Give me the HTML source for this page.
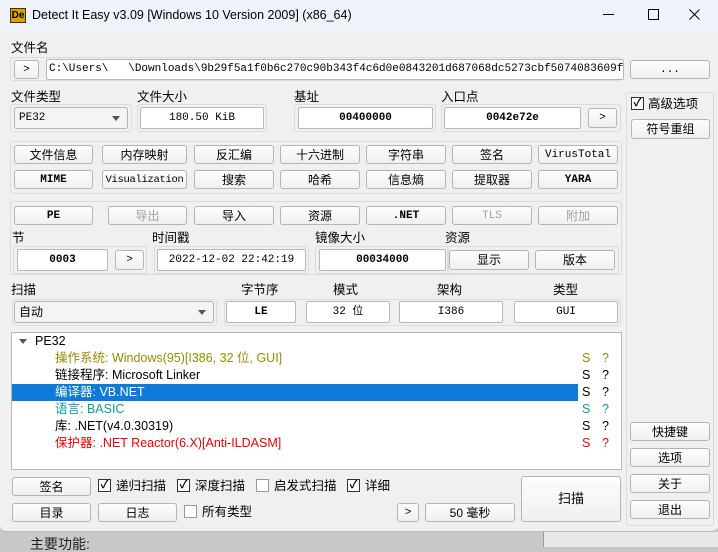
<!DOCTYPE html>
<html><head><meta charset="utf-8"><style>
*{box-sizing:border-box;margin:0;padding:0}
body{width:718px;height:547px;overflow:hidden;background:#c8c8c8;font-family:"Liberation Sans","Noto Sans CJK SC",sans-serif;font-size:12px;color:#000;position:relative}
.a{position:absolute}
.win{left:0;top:0;width:718px;height:532px;background:#f0f0f0;border-bottom:1px solid #bbb;border-radius:0 0 6px 6px}
.title{left:0;top:0;width:718px;height:31px;background:#eef3f9}
.b{position:absolute;background:linear-gradient(#fdfdfd,#f0f0f0);border:1px solid #b4b4b4;border-radius:3px;text-align:center;font-size:12px;line-height:14px;display:flex;align-items:center;justify-content:center;white-space:nowrap}
.m{font-family:"Liberation Mono","Noto Sans CJK SC",monospace;font-size:11px}
.d{color:#a0a0a0}
.f{position:absolute;background:#fff;border:1px solid #b8b8b8;border-radius:2px;display:flex;align-items:center;justify-content:center;font-family:"Liberation Mono",monospace;font-size:11px;line-height:14px}
.bold{font-weight:bold}
.g{position:absolute;border:1px solid #dcdcdc;border-radius:3px}
.l{position:absolute;font-size:12.5px;line-height:14px}
.cb{position:absolute;width:13px;height:13px;border:1px solid #333;background:#fff;font-size:11px;line-height:11px;text-align:center;font-weight:bold}
.cb.e{border-color:#999}
.row{position:absolute;left:55px;height:17px;font-size:12.5px;line-height:17px;white-space:nowrap}
.sq{position:absolute;font-size:12.5px;line-height:17px}
</style></head><body>
<div class="a win"></div>
<div class="a title"></div>
<div class="a" style="left:10px;top:8px;width:16px;height:15px;background:#e0a000;border:1px solid #333;font-size:10px;font-weight:bold;line-height:13px;color:#000;text-align:center">De</div>
<div class="a" style="left:32px;top:8px;font-size:12.5px;line-height:14px">Detect It Easy v3.09 [Windows 10 Version 2009] (x86_64)</div>
<div class="a" style="left:603px;top:14px;width:11px;height:1px;background:#000"></div>
<div class="a" style="left:648px;top:9px;width:11px;height:11px;border:1px solid #000"></div>
<svg class="a" style="left:689px;top:9px" width="11" height="11"><path d="M0.5 0.5L10.5 10.5M10.5 0.5L0.5 10.5" stroke="#000" stroke-width="1"/></svg>

<div class="l" style="left:11px;top:41px">文件名</div>
<div class="g" style="left:10px;top:57px;width:612px;height:24px"></div>
<div class="b m" style="left:14px;top:60px;width:25px;height:19px">&gt;</div>
<div class="a" style="left:46px;top:59px;width:578px;height:21px;background:#fff;border:1px solid #b8b8b8;border-radius:2px;font-family:'Liberation Mono',monospace;font-size:11px;line-height:19px;padding-left:2px;white-space:nowrap;overflow:hidden">C:\Users\&nbsp;&nbsp;&nbsp;\Downloads\9b29f5a1f0b6c270c90b343f4c6d0e0843201d687068dc5273cbf5074083609f</div>
<div class="b m" style="left:630px;top:60px;width:80px;height:19px">...</div>

<div class="l" style="left:11px;top:90px">文件类型</div>
<div class="l" style="left:137px;top:90px">文件大小</div>
<div class="l" style="left:294px;top:90px">基址</div>
<div class="l" style="left:441px;top:90px">入口点</div>
<div class="g" style="left:10px;top:104px;width:122px;height:28px"></div>
<div class="g" style="left:137px;top:104px;width:130px;height:28px"></div>
<div class="g" style="left:294px;top:104px;width:142px;height:28px"></div>
<div class="g" style="left:441px;top:104px;width:180px;height:28px"></div>
<div class="b m" style="left:14px;top:107px;width:114px;height:22px;justify-content:flex-start;padding-left:4px;background:#f4f4f4">PE32<span style="position:absolute;right:7px;top:8px;border:4px solid transparent;border-top:5px solid #555"></span></div>
<div class="f" style="left:140px;top:107px;width:124px;height:22px">180.50 KiB</div>
<div class="f bold" style="left:298px;top:107px;width:135px;height:22px">00400000</div>
<div class="f bold" style="left:444px;top:107px;width:137px;height:22px">0042e72e</div>
<div class="b m" style="left:588px;top:108px;width:29px;height:20px">&gt;</div>

<div class="g" style="left:626px;top:92px;width:88px;height:434px"></div>
<div class="cb" style="left:631px;top:97px">✓</div>
<div class="l" style="left:648px;top:97px">高级选项</div>
<div class="b" style="left:631px;top:119px;width:79px;height:20px">符号重组</div>

<div class="g" style="left:10px;top:141px;width:612px;height:53px"></div>
<div class="b" style="left:14px;top:145px;width:79px;height:19px">文件信息</div>
<div class="b" style="left:102px;top:145px;width:85px;height:19px">内存映射</div>
<div class="b" style="left:194px;top:145px;width:80px;height:19px">反汇编</div>
<div class="b" style="left:280px;top:145px;width:80px;height:19px">十六进制</div>
<div class="b" style="left:366px;top:145px;width:80px;height:19px">字符串</div>
<div class="b" style="left:452px;top:145px;width:80px;height:19px">签名</div>
<div class="b m" style="left:538px;top:145px;width:80px;height:19px">VirusTotal</div>
<div class="b m bold" style="left:14px;top:170px;width:79px;height:19px">MIME</div>
<div class="b m" style="left:102px;top:170px;width:85px;height:19px;font-size:10.5px;letter-spacing:-0.3px">Visualization</div>
<div class="b" style="left:194px;top:170px;width:80px;height:19px">搜索</div>
<div class="b" style="left:280px;top:170px;width:80px;height:19px">哈希</div>
<div class="b" style="left:366px;top:170px;width:80px;height:19px">信息熵</div>
<div class="b" style="left:452px;top:170px;width:80px;height:19px">提取器</div>
<div class="b m bold" style="left:538px;top:170px;width:80px;height:19px">YARA</div>

<div class="g" style="left:10px;top:201px;width:612px;height:74px"></div>
<div class="b m bold" style="left:14px;top:206px;width:79px;height:19px">PE</div>
<div class="b d" style="left:108px;top:206px;width:79px;height:19px">导出</div>
<div class="b" style="left:194px;top:206px;width:80px;height:19px">导入</div>
<div class="b" style="left:280px;top:206px;width:80px;height:19px">资源</div>
<div class="b m bold" style="left:366px;top:206px;width:80px;height:19px">.NET</div>
<div class="b m d" style="left:452px;top:206px;width:80px;height:19px">TLS</div>
<div class="b d" style="left:538px;top:206px;width:80px;height:19px">附加</div>
<div class="l" style="left:12px;top:231px">节</div>
<div class="l" style="left:152px;top:231px">时间戳</div>
<div class="l" style="left:315px;top:231px">镜像大小</div>
<div class="l" style="left:445px;top:231px">资源</div>
<div class="g" style="left:13px;top:246px;width:134px;height:28px"></div>
<div class="g" style="left:154px;top:246px;width:155px;height:28px"></div>
<div class="g" style="left:315px;top:246px;width:134px;height:28px"></div>
<div class="g" style="left:447px;top:246px;width:172px;height:28px"></div>
<div class="f bold" style="left:17px;top:249px;width:91px;height:22px">0003</div>
<div class="b m" style="left:115px;top:250px;width:29px;height:20px">&gt;</div>
<div class="f" style="left:157px;top:249px;width:149px;height:22px">2022-12-02 22:42:19</div>
<div class="f bold" style="left:319px;top:249px;width:127px;height:22px">00034000</div>
<div class="b" style="left:449px;top:250px;width:80px;height:20px">显示</div>
<div class="b" style="left:535px;top:250px;width:80px;height:20px">版本</div>

<div class="l" style="left:11px;top:283px">扫描</div>
<div class="l" style="left:241px;top:283px">字节序</div>
<div class="l" style="left:333px;top:283px">模式</div>
<div class="l" style="left:437px;top:283px">架构</div>
<div class="l" style="left:553px;top:283px">类型</div>
<div class="g" style="left:12px;top:299px;width:205px;height:27px"></div>
<div class="g" style="left:224px;top:299px;width:397px;height:27px"></div>
<div class="b" style="left:14px;top:301px;width:200px;height:22px;justify-content:flex-start;padding-left:4px;background:#f4f4f4">自动<span style="position:absolute;right:7px;top:8px;border:4px solid transparent;border-top:5px solid #555"></span></div>
<div class="f bold" style="left:226px;top:301px;width:70px;height:22px">LE</div>
<div class="f" style="left:306px;top:301px;width:84px;height:22px;font-family:'Liberation Mono','Noto Sans CJK SC',monospace">32 位</div>
<div class="f" style="left:399px;top:301px;width:104px;height:22px">I386</div>
<div class="f" style="left:514px;top:301px;width:104px;height:22px">GUI</div>

<div class="a" style="left:11px;top:332px;width:611px;height:138px;background:#fff;border:1px solid #b8b8b8"></div>
<div class="a" style="left:19px;top:339px;border:4px solid transparent;border-top:5px solid #555"></div>
<div class="row" style="left:35px;top:333px">PE32</div>
<div class="row" style="top:350px;color:#9a8a00">操作系统: Windows(95)[I386, 32 位, GUI]</div>
<div class="row" style="top:367px">链接程序: Microsoft Linker</div>
<div class="a" style="left:12px;top:384px;width:566px;height:17px;background:#0f7bd9"></div>
<div class="row" style="top:384px;color:#fff">编译器: VB.NET</div>
<div class="row" style="top:401px;color:#109aa0">语言: BASIC</div>
<div class="row" style="top:418px">库: .NET(v4.0.30319)</div>
<div class="row" style="top:435px;color:#f00000">保护器: .NET Reactor(6.X)[Anti-ILDASM]</div>
<div class="sq" style="left:582px;top:350px;color:#9a8a00">S</div><div class="sq" style="left:602px;top:350px;color:#9a8a00">?</div>
<div class="sq" style="left:582px;top:367px">S</div><div class="sq" style="left:602px;top:367px">?</div>
<div class="sq" style="left:582px;top:384px">S</div><div class="sq" style="left:602px;top:384px">?</div>
<div class="sq" style="left:582px;top:401px;color:#109aa0">S</div><div class="sq" style="left:602px;top:401px;color:#109aa0">?</div>
<div class="sq" style="left:582px;top:418px">S</div><div class="sq" style="left:602px;top:418px">?</div>
<div class="sq" style="left:582px;top:435px;color:#f00">S</div><div class="sq" style="left:602px;top:435px;color:#f00">?</div>

<div class="b" style="left:12px;top:477px;width:79px;height:19px">签名</div>
<div class="cb" style="left:98px;top:479px">✓</div><div class="l" style="left:116px;top:479px">递归扫描</div>
<div class="cb" style="left:177px;top:479px">✓</div><div class="l" style="left:195px;top:479px">深度扫描</div>
<div class="cb e" style="left:256px;top:479px"></div><div class="l" style="left:274px;top:479px">启发式扫描</div>
<div class="cb" style="left:347px;top:479px">✓</div><div class="l" style="left:365px;top:479px">详细</div>
<div class="b" style="left:12px;top:503px;width:79px;height:19px">目录</div>
<div class="b" style="left:98px;top:503px;width:79px;height:19px">日志</div>
<div class="cb e" style="left:184px;top:505px"></div><div class="l" style="left:202px;top:505px">所有类型</div>
<div class="b m" style="left:397px;top:503px;width:22px;height:19px">&gt;</div>
<div class="b" style="left:425px;top:503px;width:90px;height:19px">50 毫秒</div>
<div class="b" style="left:521px;top:476px;width:100px;height:46px;font-size:13px">扫描</div>
<div class="b" style="left:630px;top:422px;width:80px;height:19px">快捷键</div>
<div class="b" style="left:630px;top:448px;width:80px;height:19px">选项</div>
<div class="b" style="left:630px;top:474px;width:80px;height:19px">关于</div>
<div class="b" style="left:630px;top:500px;width:80px;height:19px">退出</div>

<div class="a" style="left:543px;top:532px;width:1px;height:15px;background:#999"></div>
<div class="a" style="left:544px;top:532px;width:174px;height:15px;background:#e8e8e8"></div>
<div class="a" style="left:30px;top:536px;font-size:14px;line-height:16px;color:#222">主要功能:</div>
</body></html>
